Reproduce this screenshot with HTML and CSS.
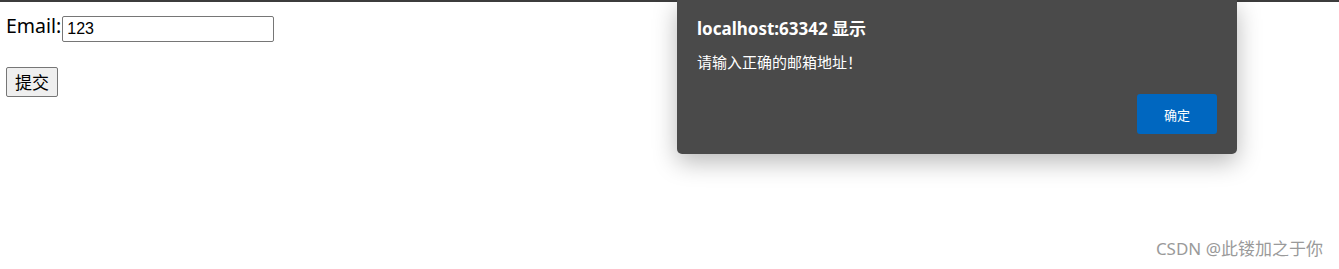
FILE: index.html
```html
<!DOCTYPE html>
<html lang="zh">
<head>
<meta charset="utf-8">
<link rel="stylesheet" href="styles.css">
</head>
<body>
<div class="topbar"></div>
<form class="form">
  <div class="row">
    <label class="label" for="email">Email:</label><input class="input" id="email" type="text" value="123">
  </div>
  <div class="row row-btn">
    <button class="submit" type="button">提交</button>
  </div>
</form>
<div class="dialog">
  <div class="dialog-title">localhost:63342 显示</div>
  <div class="dialog-msg">请输入正确的邮箱地址！</div>
  <div class="dialog-actions">
    <button class="ok" type="button">确定</button>
  </div>
</div>
<div class="watermark">CSDN @此镂加之于你</div>
</body>
</html>
```
FILE: styles.css
```css
html, body {
  margin: 0;
  padding: 0;
  width: 1339px;
  height: 269px;
  overflow: hidden;
  background: #ffffff;
  position: relative;
}
.topbar {
  height: 2px;
  background: #3c3c3c;
}
.form {
  padding: 12px 6px 0 6px;
  font-family: "Noto Sans", "Noto Sans CJK SC", sans-serif;
}
.row {
  display: flex;
  align-items: center;
  height: 28px;
}
.label {
  font-size: 19.5px;
  color: #000;
  line-height: 28px;
  margin-top: -4px;
  margin-right: 1px;
}
.input {
  box-sizing: border-box;
  width: 212px;
  height: 26px;
  margin: 1px 0 0 0;
  padding: 1px 4px;
  border: 1px solid #767676;
  border-radius: 2px;
  font-family: "Liberation Sans", Arial, sans-serif;
  font-size: 16px;
  color: #000;
  outline: none;
}
.row-btn {
  margin-top: 24px;
  height: 32px;
}
.submit {
  box-sizing: border-box;
  width: 52px;
  height: 30px;
  padding: 0;
  border: 1px solid #767676;
  border-radius: 2px;
  background: #efefef;
  font-family: "Noto Sans CJK SC", sans-serif;
  font-size: 17px;
  color: #000;
  line-height: 26px;
}
.dialog {
  position: absolute;
  left: 677px;
  top: 0;
  width: 560px;
  height: 154px;
  box-sizing: border-box;
  padding: 15px 20px 0 20px;
  background: #4a4a4a;
  border-radius: 0 0 5px 5px;
  box-shadow: 0 8px 24px rgba(0, 0, 0, 0.28);
  font-family: "Noto Sans", "Noto Sans CJK SC", sans-serif;
  color: #ffffff;
  display: flex;
  flex-direction: column;
}
.dialog-title {
  font-size: 17px;
  font-weight: bold;
  line-height: 28px;
}
.dialog-msg {
  margin-top: 8px;
  font-size: 15px;
  line-height: 22px;
}
.dialog-actions {
  display: flex;
  justify-content: flex-end;
  margin-top: 21px;
}
.ok {
  width: 80px;
  height: 40px;
  border: none;
  border-radius: 3px;
  background: #0067c0;
  color: #ffffff;
  font-family: "Noto Sans CJK SC", sans-serif;
  font-size: 13px;
  padding: 0;
}
.watermark {
  position: absolute;
  right: 16px;
  top: 237px;
  font-family: "Noto Sans", "Noto Sans CJK SC", sans-serif;
  font-size: 17px;
  color: #9a9a9a;
  line-height: 24px;
}
```
